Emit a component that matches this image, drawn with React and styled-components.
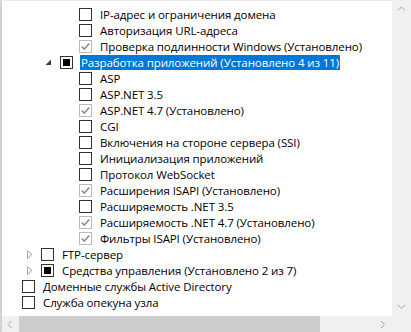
import React from 'react';
import styled, { createGlobalStyle } from 'styled-components';

const GlobalStyle = createGlobalStyle`
  html, body {
    margin: 0;
    padding: 0;
    background: #fff;
  }
  body {
    font-family: "Open Sans", "Noto Sans", sans-serif;
  }
`;

const Frame = styled.div`
  width: 411px;
  height: 332px;
  box-sizing: border-box;
  display: flex;
  flex-direction: column;
  border-left: 2px solid #d2d2d2;
  border-top: 1px solid #ececec;
  background: #fff;
  overflow: hidden;
`;

const Body = styled.div`
  display: flex;
  flex: 1;
  min-height: 0;
`;

const Tree = styled.ul`
  list-style: none;
  margin: 0;
  padding: 5px 0 0;
  flex: 1;
  overflow: hidden;
`;

const Row = styled.li`
  display: flex;
  align-items: center;
  height: 16px;
  padding-left: ${(p) => 1 + p.$level * 19}px;
  white-space: nowrap;
`;

const Expander = styled.span`
  width: 19px;
  height: 16px;
  flex: none;
  display: flex;
  align-items: center;
  justify-content: center;
`;

const Box = styled.span`
  position: relative;
  width: 13px;
  height: 13px;
  box-sizing: border-box;
  flex: none;
  border: 1px solid ${(p) => (p.$state === 'on' ? '#bcbcbc' : '#333')};
  background: #fff;
  display: flex;
  align-items: center;
  justify-content: center;

  &::after {
    content: '';
    display: ${(p) => (p.$state === 'mixed' ? 'block' : 'none')};
    width: 7px;
    height: 7px;
    background: #000;
  }
`;

const Label = styled.span`
  margin-left: 7px;
  padding: 0 1px;
  height: 15px;
  line-height: 15px;
  font-size: 11.5px;
  letter-spacing: -0.1px;
  color: ${(p) => (p.$selected ? '#fff' : '#000')};
  background: ${(p) => (p.$selected ? '#0078d7' : 'transparent')};
`;

const VScroll = styled.div`
  width: 19px;
  flex: none;
  background: #f0f0f0;
  display: flex;
  flex-direction: column;
  justify-content: space-between;
`;

const ArrowButton = styled.span`
  width: ${(p) => (p.$wide ? 17 : 19)}px;
  height: ${(p) => (p.$wide ? 16 : 17)}px;
  flex: none;
  display: flex;
  align-items: center;
  justify-content: center;
`;

const HBar = styled.div`
  height: 16px;
  flex: none;
  display: flex;
  background: #f0f0f0;
`;

const Track = styled.div`
  flex: 1;
  display: flex;
`;

const Thumb = styled.div`
  width: 301px;
  background: #cdcdcd;
`;

const Corner = styled.div`
  width: 19px;
  flex: none;
  background: #f0f0f0;
`;

const Chevron = ({ dir }) => {
  const paths = {
    up: 'M1 5.5 L4.5 2 L8 5.5',
    down: 'M1 2 L4.5 5.5 L8 2',
    left: 'M5.5 1 L2 4.5 L5.5 8',
    right: 'M2 1 L5.5 4.5 L2 8',
  };
  return (
    <svg width="9" height="9" viewBox="0 0 9 9">
      <path d={paths[dir]} fill="none" stroke="#a3a3a3" strokeWidth="1" />
    </svg>
  );
};

const Toggle = ({ open }) =>
  open === undefined ? null : open ? (
    <svg width="7" height="7" viewBox="0 0 7 7" style={{ marginLeft: -4 }}>
      <polygon points="6,0.5 6,6 0.5,6" fill="#3c3c3c" />
    </svg>
  ) : (
    <svg width="6" height="9" viewBox="0 0 6 9" style={{ marginLeft: -4 }}>
      <polygon points="0.5,0.5 5,4.5 0.5,8.5" fill="none" stroke="#a6a6a6" />
    </svg>
  );

const Check = () => (
  <svg width="11" height="11" viewBox="0 0 11 11">
    <path d="M1.8 5.6 L4.3 8.1 L9.3 2.6" fill="none" stroke="#8f8f8f" strokeWidth="1.5" />
  </svg>
);

const items = [
  { level: 3, text: 'IP-адрес и ограничения домена', state: 'off' },
  { level: 3, text: 'Авторизация URL-адреса', state: 'off' },
  { level: 3, text: 'Проверка подлинности Windows (Установлено)', state: 'on' },
  { level: 2, text: 'Разработка приложений (Установлено 4 из 11)', state: 'mixed', open: true, selected: true },
  { level: 3, text: 'ASP', state: 'off' },
  { level: 3, text: 'ASP.NET 3.5', state: 'off' },
  { level: 3, text: 'ASP.NET 4.7 (Установлено)', state: 'on' },
  { level: 3, text: 'CGI', state: 'off' },
  { level: 3, text: 'Включения на стороне сервера (SSI)', state: 'off' },
  { level: 3, text: 'Инициализация приложений', state: 'off' },
  { level: 3, text: 'Протокол WebSocket', state: 'off' },
  { level: 3, text: 'Расширения ISAPI (Установлено)', state: 'on' },
  { level: 3, text: 'Расширяемость .NET 3.5', state: 'off' },
  { level: 3, text: 'Расширяемость .NET 4.7 (Установлено)', state: 'on' },
  { level: 3, text: 'Фильтры ISAPI (Установлено)', state: 'on' },
  { level: 1, text: 'FTP-сервер', state: 'off', open: false },
  { level: 1, text: 'Средства управления (Установлено 2 из 7)', state: 'mixed', open: false },
  { level: 0, text: 'Доменные службы Active Directory', state: 'off' },
  { level: 0, text: 'Служба опекуна узла', state: 'off' },
];

export default function App() {
  return (
    <>
      <GlobalStyle />
      <Frame>
        <Body>
          <Tree>
            {items.map((item) => (
              <Row key={item.text} $level={item.level}>
                <Expander>
                  <Toggle open={item.open} />
                </Expander>
                <Box $state={item.state}>{item.state === 'on' && <Check />}</Box>
                <Label $selected={item.selected}>{item.text}</Label>
              </Row>
            ))}
          </Tree>
          <VScroll>
            <ArrowButton>
              <Chevron dir="up" />
            </ArrowButton>
            <ArrowButton>
              <Chevron dir="down" />
            </ArrowButton>
          </VScroll>
        </Body>
        <HBar>
          <ArrowButton $wide>
            <Chevron dir="left" />
          </ArrowButton>
          <Track>
            <Thumb />
          </Track>
          <ArrowButton $wide>
            <Chevron dir="right" />
          </ArrowButton>
          <Corner />
        </HBar>
      </Frame>
    </>
  );
}
